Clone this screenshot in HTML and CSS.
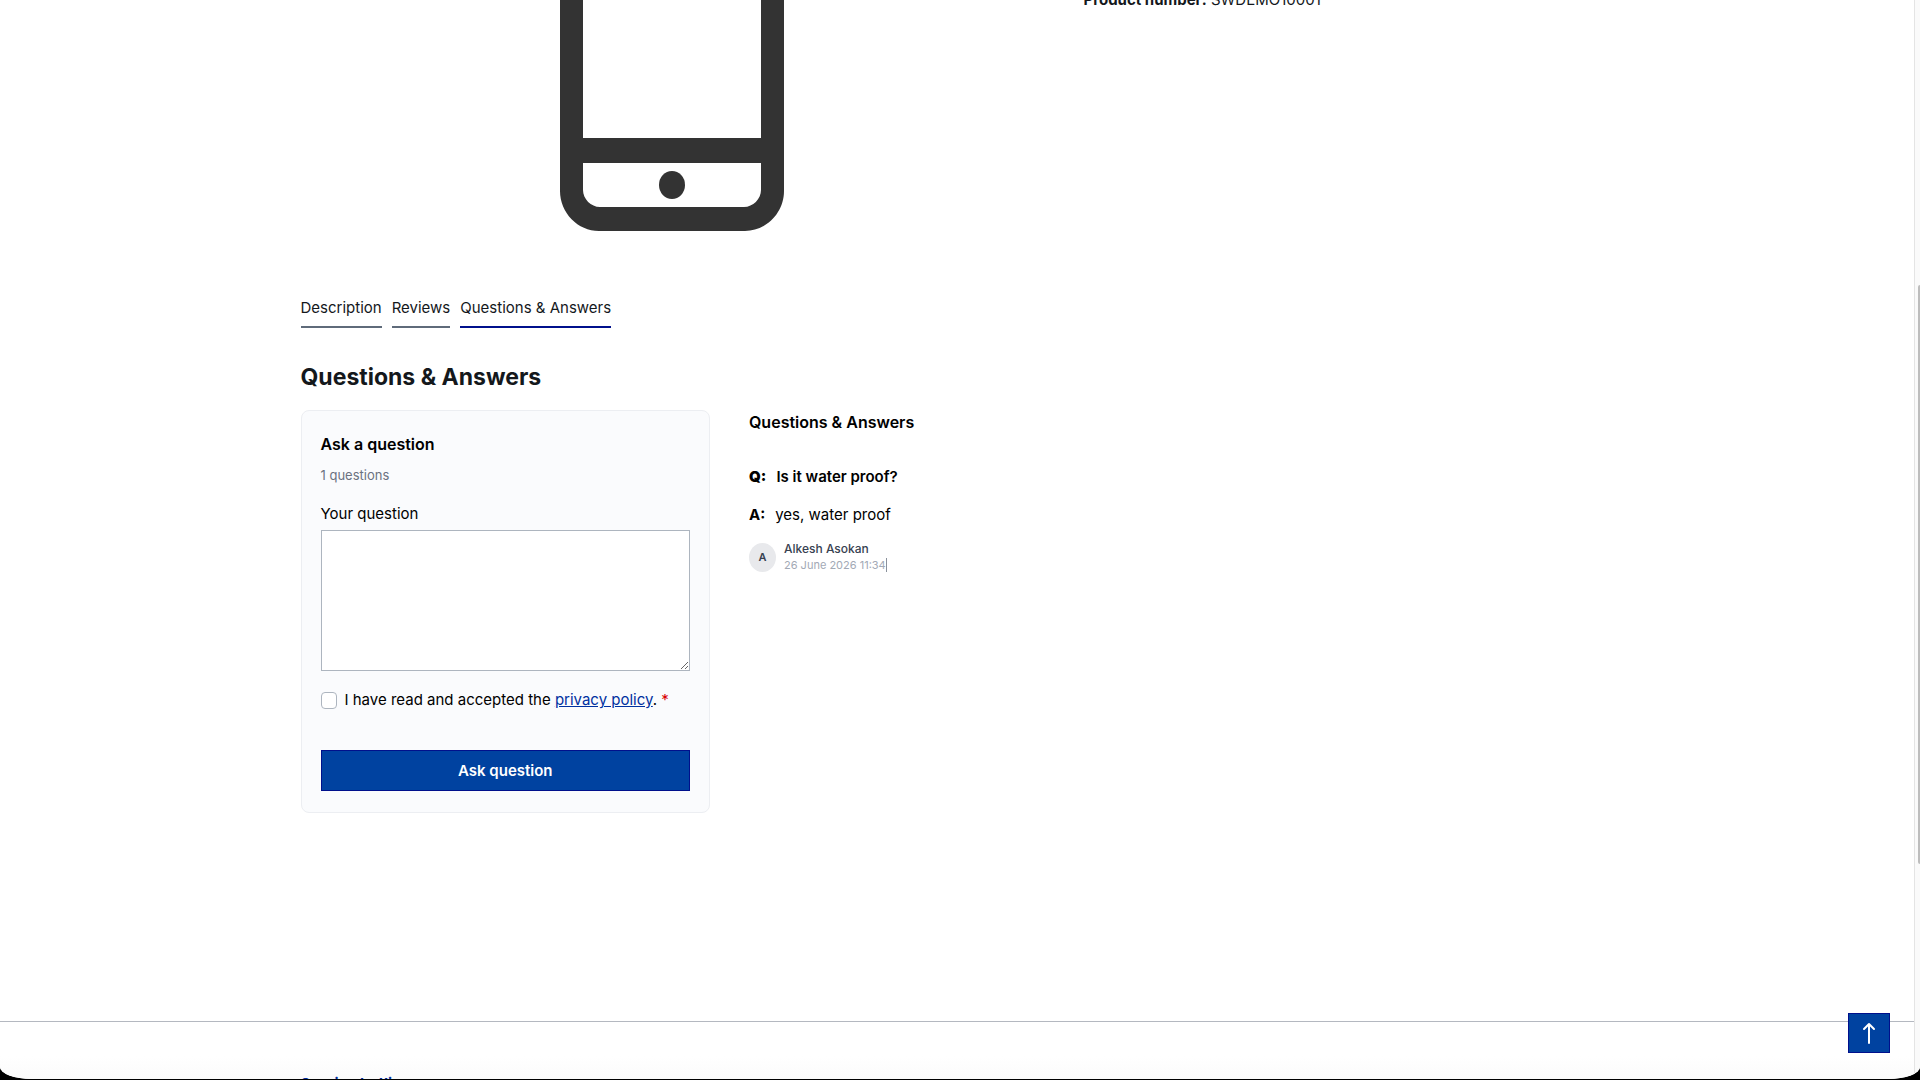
FILE: index.html
```html
<!DOCTYPE html>
<html lang="en">
<head>
<meta charset="utf-8">
<title>Product – Questions &amp; Answers</title>
<link rel="stylesheet" href="styles.css">
</head>
<body>
<div class="window">
  <div class="page">
    <main class="container">
      <section class="product">
        <div class="gallery">
          <svg class="phone" width="224" height="232" viewBox="0 0 224 232" role="img" aria-label="Mobile phone">
            <path fill="#333" fill-rule="evenodd" d="M0 0H23V138H201V0H224V191C224 213 206 231 185 231H39C18 231 0 213 0 191ZM23 163V190C23 199 31 207 40 207H184C193 207 201 199 201 190V163Z"/>
            <ellipse cx="112" cy="185" rx="13" ry="14" fill="#333"/>
          </svg>
        </div>
        <p class="product-number"><strong>Product number:</strong> SWDEMO10001</p>
      </section>

      <nav class="tabs">
        <a href="#description">Description</a>
        <a href="#reviews">Reviews</a>
        <a class="active" href="#questions">Questions &amp; Answers</a>
      </nav>

      <section id="questions">
        <h2 class="title">Questions &amp; Answers</h2>
        <div class="qa">
          <form class="card">
            <h3 class="subtitle">Ask a question</h3>
            <p class="count">1 questions</p>
            <label class="label" for="question">Your question</label>
            <textarea class="question-input" id="question"></textarea>
            <div class="consent">
              <input type="checkbox" id="privacy">
              <label for="privacy">I have read and accepted the <a href="#privacy-policy">privacy policy</a>. <span class="required">*</span></label>
            </div>
            <button class="submit" type="submit">Ask question</button>
          </form>
          <div class="answers">
            <h3 class="subtitle">Questions &amp; Answers</h3>
            <p class="entry question"><b>Q:</b><span>Is it water proof?</span></p>
            <p class="entry"><b>A:</b><span>yes, water proof</span></p>
            <div class="author">
              <span class="avatar">A</span>
              <div>
                <div class="name">Alkesh Asokan</div>
                <div class="date">26 June 2026 11:34<span class="caret"></span></div>
              </div>
            </div>
          </div>
        </div>
      </section>
    </main>
    <footer class="footer">
      <div class="container">
        <h4 class="hotline">Service hotline</h4>
      </div>
    </footer>
  </div>
  <div class="scroll-track"><div class="scroll-thumb"></div></div>
  <button class="to-top" type="button" aria-label="Back to top">
    <svg width="14" height="22" viewBox="0 0 14 22" fill="none" stroke="#fff" stroke-width="2" stroke-linecap="round" stroke-linejoin="round"><path d="M7 21V2M2 7L7 2L12 7"/></svg>
  </button>
</div>
</body>
</html>
```
FILE: styles.css
```css
* { box-sizing: border-box; }

body {
  margin: 0;
  background: #000;
  color: #14181c;
  font: 15px/24px Inter, "Liberation Sans", sans-serif;
}

h2, h3, h4, p { margin: 0; }

.window {
  position: relative;
  display: flex;
  height: calc(100vh - 1px);
  overflow: hidden;
  background: #fff;
  border-radius: 0 0 32px 32px / 0 0 12px 12px;
}

.page {
  flex: 1;
  display: flex;
  flex-direction: column;
}

.container {
  width: 100%;
  max-width: 1313px;
  margin: 0 auto;
}

.product {
  display: grid;
  grid-template-columns: 743fr 530fr;
  gap: 40px;
  margin-bottom: 64px;
}

.gallery {
  display: flex;
  justify-content: center;
}

.phone { display: block; }

.product-number { margin-top: -12px; }

.tabs {
  display: flex;
  gap: 10px;
}

.tabs a {
  padding-bottom: 6px;
  border-bottom: 2px solid #5f6b7a;
  color: inherit;
  text-decoration: none;
}

.tabs .active { border-color: #00108c; }

.title {
  margin: 33px 0 17px;
  font-size: 23px;
  line-height: 32px;
  font-weight: 700;
}

.qa {
  display: grid;
  grid-template-columns: 9fr 19fr;
  gap: 39px;
  align-items: start;
  color: #000;
}

.card {
  display: flex;
  flex-direction: column;
  padding: 21px 19px;
  background: #fafbfd;
  border: 1px solid #eceef2;
  border-radius: 8px;
}

.subtitle {
  font-size: 16px;
  line-height: 24px;
  font-weight: 600;
}

.count {
  margin: 9px 0 17px;
  color: #6b7280;
  font-size: 13px;
  line-height: 20px;
}

.label { margin-bottom: 4px; }

.question-input {
  height: 141px;
  border: 1px solid #adb5bf;
  border-radius: 0;
  background: #fff;
  font: inherit;
  resize: vertical;
}

.consent {
  display: flex;
  align-items: center;
  gap: 8px;
  margin: 17px 0 38px;
}

.consent input {
  appearance: none;
  width: 16px;
  height: 17px;
  margin: 0;
  background: #fff;
  border: 1px solid #adb5bf;
  border-radius: 4px;
}

.consent a { color: #0030a0; }

.required { color: #d80000; }

.submit {
  height: 41px;
  border: 1px solid #00108c;
  background: #0042a0;
  color: #fff;
  font: inherit;
  font-weight: 600;
}

.answers .subtitle { margin-bottom: 31px; }

.entry {
  display: flex;
  gap: 10px;
  margin-bottom: 14px;
}

.question { font-weight: 600; }

.author {
  display: flex;
  align-items: center;
  gap: 8px;
}

.avatar {
  display: flex;
  align-items: center;
  justify-content: center;
  width: 27px;
  height: 29px;
  border-radius: 50%;
  background: #e8e9ec;
  color: #374151;
  font-size: 11px;
  font-weight: 600;
}

.name {
  color: #374151;
  font-size: 12px;
  line-height: 16px;
  font-weight: 500;
}

.date {
  display: flex;
  align-items: center;
  color: #a2a9b5;
  font-size: 11px;
  line-height: 16px;
}

.caret {
  width: 1px;
  height: 14px;
  background: #8a919c;
}

.footer {
  flex: none;
  height: 58px;
  margin-top: auto;
  padding-top: 50px;
  border-top: 1px solid #b4b8c0;
  background: linear-gradient(#fff 60%, #fbfbfb);
}

.hotline {
  color: #0030a0;
  font-size: 15px;
  line-height: 24px;
  font-weight: 700;
}

.scroll-track {
  display: flex;
  flex-direction: column;
  align-items: flex-end;
  width: 6px;
  padding-top: 285px;
  border-left: 1px solid #e4e4e4;
  background: #fafafa;
}

.scroll-thumb {
  width: 2px;
  height: 579px;
  border-radius: 2px 0 0 2px;
  background: #bdbdbd;
}

/* floats above the page content */
.to-top {
  position: absolute;
  right: 30px;
  bottom: 26px;
  display: flex;
  align-items: center;
  justify-content: center;
  width: 42px;
  height: 40px;
  padding: 0;
  border: 1px solid #00108c;
  background: #0042a0;
}
```
